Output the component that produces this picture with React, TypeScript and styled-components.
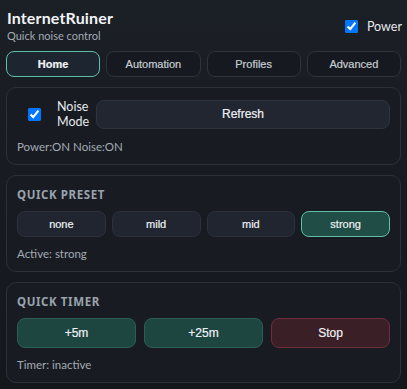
import React, { useState } from "react";
import styled, { createGlobalStyle } from "styled-components";

const Global = createGlobalStyle`
  html, body { margin: 0; padding: 0; }
  body {
    background: linear-gradient(180deg, #1b1f26 0%, #14171c 100%);
    min-height: 389px;
    color: #e6e9ee;
    font-family: Lato, "Noto Sans", sans-serif;
  }
`;

const Page = styled.div`
  padding: 6px 6px 9px 6px;
  display: flex;
  flex-direction: column;
`;

const Header = styled.div`
  display: flex;
  justify-content: space-between;
  align-items: flex-start;
  padding-left: 1px;
`;

const TitleBlock = styled.div`
  display: flex;
  flex-direction: column;
`;

const Title = styled.div`
  font-size: 16px;
  font-weight: 700;
  letter-spacing: 0.15px;
  color: #f1f3f6;
  line-height: 22px;
  margin-top: 1px;
`;

const Subtitle = styled.div`
  font-size: 11px;
  color: #a3aab3;
  line-height: 14px;
`;

const PowerLabel = styled.label`
  display: flex;
  align-items: center;
  gap: 9px;
  font-size: 12.5px;
  color: #e6e9ee;
  margin-top: 13px;
  margin-right: -1px;
`;

const Check = styled.input`
  width: 13px;
  height: 13px;
  margin: 0;
  accent-color: #0075ff;
`;

const Tabs = styled.div`
  display: grid;
  grid-template-columns: repeat(4, 1fr);
  gap: 6px;
  margin-top: 8px;
`;

const Tab = styled.button<{ $active?: boolean }>`
  height: 26px;
  border-radius: 8px;
  border: 1px solid ${(p) => (p.$active ? "#5fbfa6" : "#2e343d")};
  background: ${(p) => (p.$active ? "#1d2630" : "#161a20")};
  color: ${(p) => (p.$active ? "#f1f3f6" : "#c7ccd3")};
  font-family: "Liberation Sans", Arial, sans-serif;
  font-size: 11px;
  font-weight: ${(p) => (p.$active ? 700 : 400)};
  -webkit-text-stroke: 0.2px currentColor;
  padding: 0;
`;

const Card = styled.div`
  margin-top: 10px;
  border: 1px solid #2c3139;
  border-radius: 10px;
  background: #181c22;
  padding: 11px 10px 10px 10px;
  display: flex;
  flex-direction: column;
  &:first-of-type {
    margin-top: 11px;
  }
`;

const ModeRow = styled.div`
  display: flex;
  align-items: center;
`;

const ModeLabel = styled.label`
  box-sizing: border-box;
  display: flex;
  align-items: center;
  gap: 16px;
  padding-left: 11px;
  width: 79px;
  font-size: 12.5px;
  line-height: 15px;
  color: #e6e9ee;
`;

const WideButton = styled.button`
  flex: 1;
  height: 29px;
  border-radius: 8px;
  border: 1px solid #2e343d;
  background: #212631;
  color: #eef1f4;
  font-family: "Liberation Sans", Arial, sans-serif;
  font-size: 12px;
  -webkit-text-stroke: 0.2px currentColor;
  padding: 0;
`;

const Status = styled.div<{ $mt: number }>`
  font-size: 11.5px;
  color: #a3aab3;
  margin-top: ${(p) => p.$mt}px;
  line-height: 14px;
`;

const SectionTitle = styled.div`
  font-family: "Noto Sans", sans-serif;
  font-size: 11.5px;
  font-weight: 700;
  letter-spacing: 0.6px;
  color: #9aa3ad;
  line-height: 14px;
  margin-top: 1px;
`;

const Grid = styled.div<{ $cols: number; $gap: number }>`
  display: grid;
  grid-template-columns: repeat(${(p) => p.$cols}, 1fr);
  gap: ${(p) => p.$gap}px;
  margin-top: 9px;
`;

type Tone = "plain" | "teal" | "tealActive" | "red";

const tones: Record<Tone, { bg: string; border: string }> = {
  plain: { bg: "#202530", border: "#2c323b" },
  teal: { bg: "#1d4641", border: "#2c5e56" },
  tealActive: { bg: "#214d47", border: "#5fbfa6" },
  red: { bg: "#3b1f26", border: "#6e2d38" },
};

const ActionButton = styled.button<{ $tone: Tone; $h: number; $fs: number }>`
  height: ${(p) => p.$h}px;
  border-radius: 8px;
  border: 1px solid ${(p) => tones[p.$tone].border};
  background: ${(p) => tones[p.$tone].bg};
  color: #eef1f4;
  font-family: "Liberation Sans", Arial, sans-serif;
  font-size: ${(p) => p.$fs}px;
  -webkit-text-stroke: 0.2px currentColor;
  padding: 0;
`;

export default function App() {
  const [power, setPower] = useState(true);
  const [noise, setNoise] = useState(true);
  const [preset, setPreset] = useState("strong");
  const tabs = ["Home", "Automation", "Profiles", "Advanced"];
  const presets = ["none", "mild", "mid", "strong"];

  return (
    <>
      <Global />
      <Page>
        <Header>
          <TitleBlock>
            <Title>InternetRuiner</Title>
            <Subtitle>Quick noise control</Subtitle>
          </TitleBlock>
          <PowerLabel>
            <Check type="checkbox" checked={power} onChange={() => setPower(!power)} />
            Power
          </PowerLabel>
        </Header>
        <Tabs>
          {tabs.map((t) => (
            <Tab key={t} $active={t === "Home"}>
              {t}
            </Tab>
          ))}
        </Tabs>
        <Card>
          <ModeRow>
            <ModeLabel>
              <Check type="checkbox" checked={noise} onChange={() => setNoise(!noise)} />
              <span>
                Noise
                <br />
                Mode
              </span>
            </ModeLabel>
            <WideButton>Refresh</WideButton>
          </ModeRow>
          <Status $mt={11}>Power:ON Noise:ON</Status>
        </Card>
        <Card>
          <SectionTitle>QUICK PRESET</SectionTitle>
          <Grid $cols={4} $gap={6}>
            {presets.map((p) => (
              <ActionButton
                key={p}
                $h={26}
                $fs={11}
                $tone={p === preset ? "tealActive" : "plain"}
                onClick={() => setPreset(p)}
              >
                {p}
              </ActionButton>
            ))}
          </Grid>
          <Status $mt={10}>Active: {preset}</Status>
        </Card>
        <Card>
          <SectionTitle>QUICK TIMER</SectionTitle>
          <Grid $cols={3} $gap={8}>
            <ActionButton $h={30} $fs={12} $tone="teal">+5m</ActionButton>
            <ActionButton $h={30} $fs={12} $tone="teal">+25m</ActionButton>
            <ActionButton $h={30} $fs={12} $tone="red">Stop</ActionButton>
          </Grid>
          <Status $mt={10}>Timer: inactive</Status>
        </Card>
      </Page>
    </>
  );
}
